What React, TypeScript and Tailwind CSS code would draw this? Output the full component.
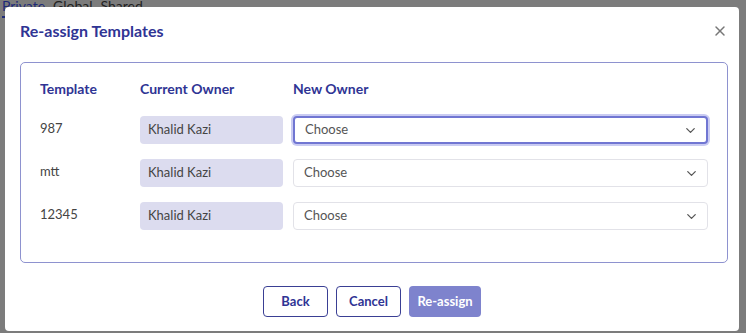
import React from 'react';
import { ChevronDown, X } from 'lucide-react';

const rows = ['987', 'mtt', '12345'];

const OwnerSelect: React.FC<{ focused?: boolean }> = ({ focused }) => (
  <div
    className={
      'flex h-[28px] flex-1 items-center justify-between rounded-[4px] bg-white pl-[10px] pr-[8px] text-[13px] text-[#555] ' +
      (focused
        ? 'border-2 border-[#7076d2] shadow-[0_0_0_2px_#c9cbf2]'
        : 'border border-[#e2e2e8]')
    }
  >
    <span>Choose</span>
    <ChevronDown size={15} strokeWidth={2} className="text-[#555]" />
  </div>
);

export default function App() {
  return (
    <div
      className="relative h-[333px] w-[746px] overflow-hidden bg-[#7c7c7c]"
      style={{ fontFamily: 'Lato, "Open Sans", sans-serif' }}
    >
      <div className="-mt-[5px] flex gap-[8px] pl-[2px] text-[14px] text-[#222]">
        <span className="border-b-2 border-[#1e2a78] text-[#1e2a78]">Private</span>
        <span>Global</span>
        <span>Shared</span>
      </div>

      <div className="absolute left-[5px] top-[7px] flex h-[324px] w-[734px] flex-col rounded-[4px] bg-white">
        <div className="flex items-center justify-between pl-[15px] pr-[11px] pt-[12px]">
          <h2 className="text-[16px] font-bold text-[#2f3494]">Re-assign Templates</h2>
          <X size={16} strokeWidth={2.2} className="text-[#777]" />
        </div>

        <div className="ml-[15px] mr-[11px] mt-[19px] rounded-[5px] border border-[#8e92cf] px-[19px] pb-[32px] pt-[15px]">
          <div className="flex text-[14px] font-bold text-[#2f3494]">
            <div className="w-[100px]">Template</div>
            <div className="w-[153px]">Current Owner</div>
            <div>New Owner</div>
          </div>
          <div className="mt-[17px] flex flex-col gap-[15px]">
            {rows.map((r, i) => (
              <div key={r} className="flex items-start">
                <div className="w-[100px] pt-[3px] text-[13px] text-[#444]">{r}</div>
                <div className="flex h-[28px] w-[143px] items-center rounded-[4px] bg-[#dcdcef] pl-[8px] text-[13px] text-[#444]">
                  Khalid Kazi
                </div>
                <div className="ml-[10px] flex flex-1">
                  <OwnerSelect focused={i === 0} />
                </div>
              </div>
            ))}
          </div>
        </div>

        <div className="mt-[23px] flex justify-center gap-[8px] text-[13px] font-bold">
          <button className="h-[31px] w-[65px] rounded-[4px] border border-[#3a3f94] bg-white text-[#2f3494]">
            Back
          </button>
          <button className="h-[31px] w-[65px] rounded-[4px] border border-[#3a3f94] bg-white text-[#2f3494]">
            Cancel
          </button>
          <button className="h-[31px] w-[72px] rounded-[4px] bg-[#7e83cd] text-white">
            Re-assign
          </button>
        </div>
      </div>
    </div>
  );
}
